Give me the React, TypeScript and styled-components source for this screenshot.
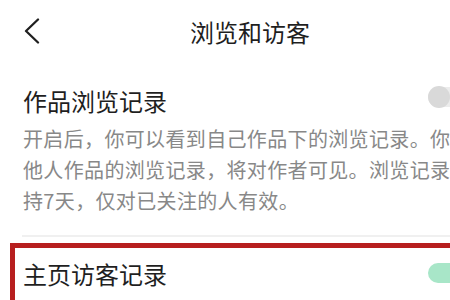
import React from "react";
import styled, { createGlobalStyle } from "styled-components";

const GlobalStyle = createGlobalStyle`
  html, body {
    margin: 0;
    padding: 0;
    background: #fff;
    overflow: hidden;
  }
  body {
    font-family: "Noto Sans CJK SC", "Noto Sans", sans-serif;
  }
`;

const App = () => {
  return (
    <>
      <GlobalStyle />
      <Screen>
        <Header>
          <BackButton aria-label="返回">
            <svg width="16" height="26" viewBox="0 0 16 26">
              <polyline
                points="14,1.5 2,13 14,24.5"
                fill="none"
                stroke="#1f1f1f"
                strokeWidth="2.3"
                strokeLinecap="round"
                strokeLinejoin="round"
              />
            </svg>
          </BackButton>
          <Title>浏览和访客</Title>
          <span />
        </Header>

        <Section>
          <Row>
            <ItemTitle>作品浏览记录</ItemTitle>
            <Toggle $on={false} $offset={3}>
              <Knob $on={false} />
            </Toggle>
          </Row>
          <Desc>
            开启后，你可以看到自己作品下的浏览记录。你
            <br />
            他人作品的浏览记录，将对作者可见。浏览记录
            <br />
            持7天，仅对已关注的人有效。
          </Desc>
        </Section>
        <Divider />

        <Highlight>
          <Row>
            <ItemTitle>主页访客记录</ItemTitle>
            <Toggle $on={true} $offset={6}>
              <Knob $on={true} />
            </Toggle>
          </Row>
        </Highlight>
      </Screen>
    </>
  );
};

export default App;

const Screen = styled.div`
  width: 500px;
  height: 300px;
  overflow: hidden;
  background: #fff;
  color: #1f1f1f;
`;

const Header = styled.header`
  display: grid;
  grid-template-columns: 1fr auto 1fr;
  align-items: center;
  height: 64px;
`;

const BackButton = styled.button`
  justify-self: start;
  display: flex;
  margin: -2px 0 0 24px;
  padding: 0;
  border: none;
  background: none;
`;

const Title = styled.h1`
  margin: 0;
  font-size: 24px;
  font-weight: 400;
  line-height: 34px;
`;

const Section = styled.section`
  padding: 20px 20px 19px 23px;
`;

const Row = styled.div`
  display: flex;
  justify-content: space-between;
  align-items: flex-start;
`;

const ItemTitle = styled.h2`
  margin: 0;
  font-size: 24px;
  font-weight: 400;
  line-height: 34px;
`;

const Toggle = styled.div<{ $on: boolean; $offset: number }>`
  position: relative;
  flex: none;
  width: 52px;
  height: 20px;
  margin-top: ${(p) => p.$offset}px;
  border-radius: 10px;
  background: ${(p) => (p.$on ? "#a8e6c8" : "#ececec")};
`;

const Knob = styled.span<{ $on: boolean }>`
  position: absolute;
  top: -1px;
  left: ${(p) => (p.$on ? "31px" : "0")};
  width: 22px;
  height: 22px;
  border-radius: 50%;
  background: ${(p) => (p.$on ? "#fff" : "#d9d9d9")};
`;

const Desc = styled.p`
  margin: 5px 0 0;
  font-size: 20px;
  letter-spacing: 0.35px;
  line-height: 31px;
  color: #888;
  white-space: nowrap;
`;

const Divider = styled.div`
  height: 2px;
  margin-left: 22px;
  background: #f0f0f0;
`;

const Highlight = styled.section`
  min-height: 100px;
  margin: 6px 0 0 10px;
  padding: 9px 15px 0 8px;
  border: 5px solid #b71f1f;
`;
